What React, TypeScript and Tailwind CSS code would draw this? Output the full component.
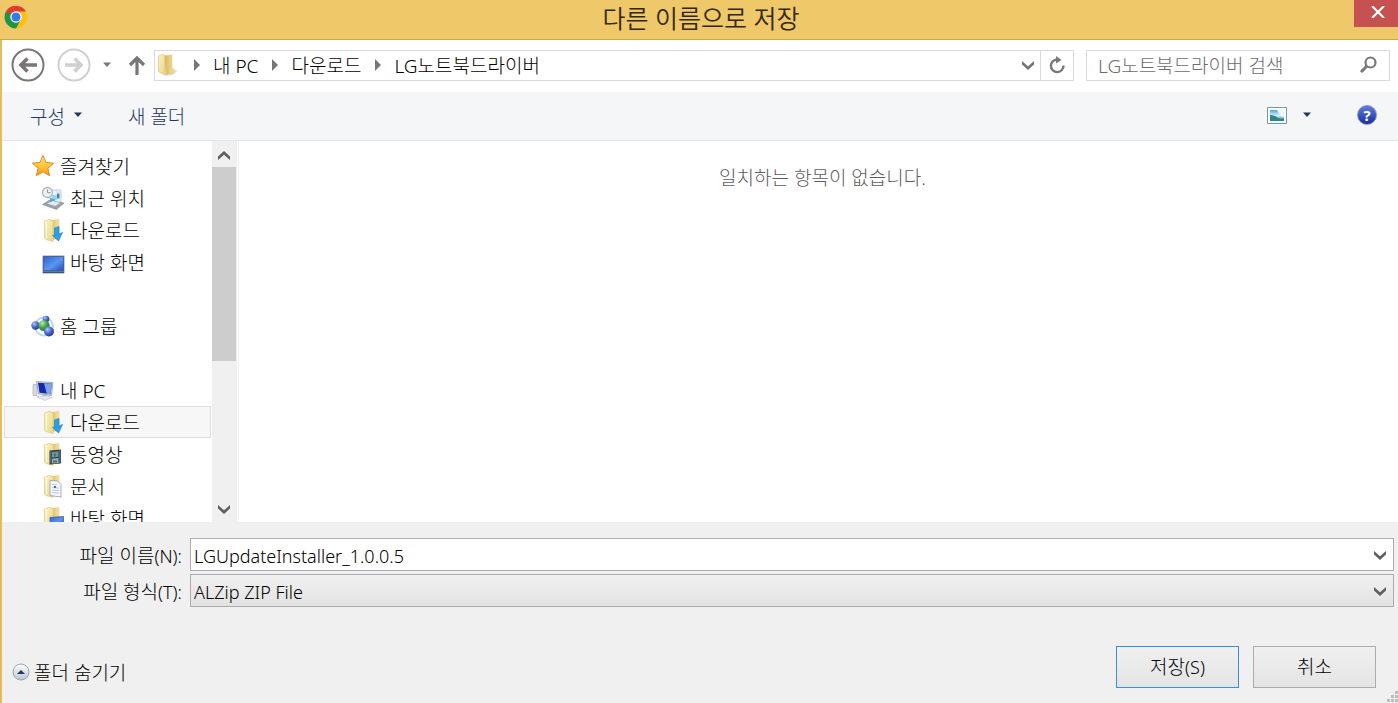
import { useState } from 'react';

const sidebarItems = [
  { id: 'favorites', name: '즐겨찾기', icon: 'star', level: 0 },
  { id: 'recent', name: '최근 위치', icon: 'recent', level: 1 },
  { id: 'fav-downloads', name: '다운로드', icon: 'download', level: 1 },
  { id: 'fav-desktop', name: '바탕 화면', icon: 'desktop', level: 1 },
  { id: 'gap-1', name: '', icon: '', level: 0 },
  { id: 'homegroup', name: '홈 그룹', icon: 'homegroup', level: 0 },
  { id: 'gap-2', name: '', icon: '', level: 0 },
  { id: 'pc', name: '내 PC', icon: 'pc', level: 0 },
  { id: 'downloads', name: '다운로드', icon: 'download', level: 1 },
  { id: 'videos', name: '동영상', icon: 'video', level: 1 },
  { id: 'documents', name: '문서', icon: 'document', level: 1 },
  { id: 'desktop', name: '바탕 화면', icon: 'folder-desktop', level: 1 },
];

const breadcrumbs = ['내 PC', '다운로드', 'LG노트북드라이버'];

function Gradients() {
  return (
    <svg width="0" height="0" className="absolute" aria-hidden="true">
      <defs>
        <linearGradient id="folderFront" x1="0" y1="0" x2="1" y2="1">
          <stop offset="0" stopColor="#fbf3c4" />
          <stop offset="1" stopColor="#ebd486" />
        </linearGradient>
        <linearGradient id="folderBack" x1="0" y1="0" x2="1" y2="0">
          <stop offset="0" stopColor="#d4b45c" />
          <stop offset="1" stopColor="#f5e6a2" />
        </linearGradient>
        <linearGradient id="starFill" x1="0" y1="0" x2="0" y2="1">
          <stop offset="0" stopColor="#ffe680" />
          <stop offset="0.5" stopColor="#ffc93c" />
          <stop offset="1" stopColor="#f7941e" />
        </linearGradient>
        <linearGradient id="screenFill" x1="0" y1="0" x2="1" y2="1">
          <stop offset="0" stopColor="#2f63cf" />
          <stop offset="0.55" stopColor="#5b95f0" />
          <stop offset="1" stopColor="#1f50bd" />
        </linearGradient>
        <radialGradient id="blueBall" cx="0.35" cy="0.3" r="0.8">
          <stop offset="0" stopColor="#b5c6f7" />
          <stop offset="0.5" stopColor="#4a66c8" />
          <stop offset="1" stopColor="#1d2f86" />
        </radialGradient>
        <radialGradient id="greenBall" cx="0.35" cy="0.3" r="0.8">
          <stop offset="0" stopColor="#b8ecb0" />
          <stop offset="0.5" stopColor="#46a04a" />
          <stop offset="1" stopColor="#1d6b2a" />
        </radialGradient>
        <linearGradient id="knob" x1="0" y1="0" x2="0" y2="1">
          <stop offset="0" stopColor="#ffffff" />
          <stop offset="1" stopColor="#b9c6d4" />
        </linearGradient>
        <linearGradient id="photo" x1="0" y1="0" x2="0" y2="1">
          <stop offset="0" stopColor="#4f9fe6" />
          <stop offset="0.5" stopColor="#d5f0fa" />
          <stop offset="1" stopColor="#2b7fa0" />
        </linearGradient>
      </defs>
    </svg>
  );
}

/** Open folder, the base of most sidebar icons */
function FolderShape() {
  return (
    <>
      <path d="M9 2.500 18 1.500V20.500L9 22z" fill="url(#folderBack)" stroke="#e3cf8c" strokeWidth="0.6" />
      <path d="M3.500 3 9 1l3.200 2.500V23.500L5 21.500l-1.500-1z" fill="url(#folderFront)" stroke="#dcc67c" strokeWidth="0.6" />
      <path d="M5.500 3.500v17" stroke="#fffbe0" strokeWidth="1.200" opacity="0.8" />
    </>
  );
}

function SidebarIcon({ name }: { name: string }) {
  return (
    <svg viewBox="0 0 24 24" className="size-6 shrink-0" aria-hidden="true">
      {name === 'star' && (
        <path
          d="M12 1.500l3.100 7 7.600.7-5.800 5 1.800 7.500L12 17.800l-6.700 3.900 1.800-7.500-5.800-5 7.600-.7z"
          fill="url(#starFill)"
          stroke="#e08a1c"
          strokeWidth="1"
          strokeLinejoin="round"
        />
      )}
      {name === 'recent' && (
        <>
          <path d="M9 4h11v13H9z" fill="#e9f3fb" stroke="#b4c8d8" strokeWidth="0.8" />
          <path d="M15 3h5v4h-5z" fill="#d4e6f4" />
          <path d="M11 9h5v5h-5z" fill="#9bd6ee" />
          <path d="M16 7.500h2.500v5H16z" fill="#3f83b8" />
          <path d="M9 12l5 1v4l-5-1z" fill="#4fb4d4" />
          <path d="M1.500 18.500 8 14.500l15 2.500-7.500 6.500z" fill="#9aa3aa" stroke="#7b868e" strokeWidth="0.6" />
          <path d="M6 17.500l6-2.500 7 2-5 3z" fill="#e3eaf0" />
          <circle cx="6.500" cy="6.500" r="5" fill="#edf1f3" stroke="#b0b8bd" strokeWidth="1.300" />
          <path d="M6.500 3.500v3.200h3" fill="none" stroke="#8b959b" strokeWidth="1" />
        </>
      )}
      {name === 'download' && (
        <>
          <FolderShape />
          <path
            d="M13.500 10 18 8.500v7.500l3.500-1.500-4 8.500-6-5.500 2-.5z"
            fill="#2f9fe0"
            stroke="#1b86cd"
            strokeWidth="0.7"
            strokeLinejoin="round"
          />
        </>
      )}
      {name === 'desktop' && (
        <>
          <path d="M1.500 5.500h22v18h-22z" fill="#8b98a8" />
          <path d="M2.500 6.500h20v14h-20z" fill="url(#screenFill)" stroke="#2b4d96" strokeWidth="0.6" />
          <path d="M2 21.500h21v1.500H2z" fill="#39577d" />
        </>
      )}
      {name === 'homegroup' && (
        <>
          <circle cx="13" cy="12.500" r="9" fill="none" stroke="#a5cfe6" strokeWidth="2" opacity="0.8" />
          <circle cx="15" cy="5" r="3.300" fill="url(#blueBall)" />
          <circle cx="4.500" cy="11.500" r="4.200" fill="url(#blueBall)" />
          <circle cx="13" cy="11.500" r="5.600" fill="url(#greenBall)" />
          <circle cx="18" cy="17.500" r="5" fill="url(#blueBall)" />
        </>
      )}
      {name === 'pc' && (
        <>
          <path d="M2 6.500h4v11H2z" fill="#d5dbe0" stroke="#a0a8b0" strokeWidth="0.6" />
          <path d="M5.500 3.500l16.500 1-1.500 13L7.500 16z" fill="#cbd6e2" stroke="#8997a8" strokeWidth="0.7" />
          <path d="M7 4.800l13.800.8-1.200 10.700L8.500 14.800z" fill="#1629a8" />
          <path d="M13 5.200l7.800.4-1.200 10.700-3.800-.5z" fill="#7fa2ec" />
          <path d="M12 17h4l1 2h-6z" fill="#9aa6b4" />
          <path d="M6 19l9-1.500 6 2-7 3z" fill="#e4e9ee" stroke="#b5bdc6" strokeWidth="0.6" />
        </>
      )}
      {name === 'video' && (
        <>
          <FolderShape />
          <path d="M8.500 8.500l11.500-1v14l-11.500 1z" fill="#39434a" />
          <path d="M11 10l6.500-.5v5.200L11 15.500z" fill="#579bb0" />
          <path d="M11 16.700l6.500-.7V21L11 21.500z" fill="#77bccb" />
          <path d="M13 11.500h2v3h-2zM12 18.500h4v2h-4z" fill="#8b5a38" />
          <path d="M9.800 9.500v12M18.800 8.500v13" stroke="#a9b3b6" strokeWidth="0.8" strokeDasharray="1 1" />
        </>
      )}
      {name === 'document' && (
        <>
          <FolderShape />
          <path d="M9 6.500l7.500.5 3.500 3.500V23L9 21.500z" fill="#f4f7fb" stroke="#8f9caf" strokeWidth="0.8" />
          <path d="M11 10.500l5 .5M11 13.500l7 .6M11 16l7 .6M11 18.500l7 .6" stroke="#b3c1d8" strokeWidth="0.9" />
          <path d="M13 12h2v2h-2z" fill="#4670b5" />
        </>
      )}
      {name === 'folder-desktop' && (
        <>
          <FolderShape />
          <path d="M9 11.500l13.500-1v10H9z" fill="url(#screenFill)" stroke="#3c5fa5" strokeWidth="0.8" />
        </>
      )}
    </svg>
  );
}

function ChromeLogo() {
  return (
    <svg viewBox="0 0 48 48" className="size-6 shrink-0" aria-hidden="true">
      <path d="M24 13h19.900A23 23 0 0 1 24 47l9.500-17.500z" fill="#fbc116" />
      <path d="M14.500 29.500 4.100 12.500 14 13l19.500 16.500L24 47z" fill="#229342" />
      <path d="M24 47A23 23 0 0 1 4.100 12.500L24 24z" fill="#229342" />
      <path d="M14.500 18.500 4.100 12.500A23 23 0 0 1 43.900 13H24z" fill="#e33b2e" />
      <circle cx="24" cy="24" r="11.500" fill="#fff" />
      <circle cx="24" cy="24" r="9" fill="#2f7bea" />
    </svg>
  );
}

function Chevron({ up = false, className = '' }: { up?: boolean; className?: string }) {
  return (
    <svg viewBox="0 0 12 10" className={`h-[10px] w-[12px] ${className}`} aria-hidden="true">
      <path d={up ? 'M0 9V5.500L6 0l6 5.500V9L6 3.700z' : 'M0 1v3.500L6 10l6-5.500V1L6 6.300z'} fill="currentColor" />
    </svg>
  );
}

function Caret() {
  return (
    <svg viewBox="0 0 10 6" className="h-[6px] w-[10px]" aria-hidden="true">
      <path d="M1 .5h8L5 5z" fill="currentColor" />
    </svg>
  );
}

function TitleBar() {
  return (
    <header className="grid h-10 shrink-0 grid-cols-[1fr_auto_1fr] items-start border-b border-[#cfa550] bg-[#efc869]">
      <div className="pt-[5px] pl-1">
        <ChromeLogo />
      </div>
      <h1 className="pl-1 text-[25px] leading-[37px] font-[350] text-[#33270f]">다른 이름으로 저장</h1>
      <button aria-label="닫기" className="flex h-[27px] w-11 items-center justify-center justify-self-end bg-[#c75050] pb-1 pl-1 text-white">
        <svg viewBox="0 0 14 12" className="h-3 w-[14px]" aria-hidden="true">
          <path d="M1 0 13 12M13 0 1 12" stroke="currentColor" strokeWidth="2.200" />
        </svg>
      </button>
    </header>
  );
}

function AddressBar() {
  return (
    <div className="flex h-[52px] shrink-0 items-center bg-white pr-2 pb-[2px] pl-[9px]">
      <button aria-label="뒤로" className="text-[#777]">
        <svg viewBox="0 0 34 34" className="size-[34px]" aria-hidden="true">
          <circle cx="17" cy="17" r="15.500" fill="none" stroke="currentColor" strokeWidth="2" />
          <path d="M9 17h17M16.500 10.500 10 17l6.500 6.500" fill="none" stroke="currentColor" strokeWidth="3.600" />
        </svg>
      </button>
      <button aria-label="앞으로" className="ml-3 text-[#d0d0d0]">
        <svg viewBox="0 0 34 34" className="size-[34px]" aria-hidden="true">
          <circle cx="17" cy="17" r="15.500" fill="none" stroke="currentColor" strokeWidth="2" />
          <path d="M8 17h17M17.500 10.500 24 17l-6.500 6.500" fill="none" stroke="currentColor" strokeWidth="3.600" />
        </svg>
      </button>
      <button aria-label="최근 위치" className="ml-[11px] text-[#777]">
        <Caret />
      </button>
      <button aria-label="위로" className="ml-4 text-[#777]">
        <svg viewBox="0 0 18 20" className="h-5 w-[18px]" aria-hidden="true">
          <path d="M9 20V3M2 10l7-7 7 7" fill="none" stroke="currentColor" strokeWidth="3.200" />
        </svg>
      </button>

      <nav className="ml-2 flex h-[31px] min-w-0 flex-1 items-center border border-[#d9d9d9]">
        <svg viewBox="0 0 24 24" className="ml-px size-6" aria-hidden="true">
          <path d="M10 20l12-3-5 5-8 1z" fill="#c9c9c9" opacity="0.6" />
          <path d="M8 2.500 16 2v13l3 2-1 3-8 2z" fill="url(#folderBack)" stroke="#e6cf7d" strokeWidth="0.6" />
          <path d="M2.500 3 7 1.500 9 3v19l-5-2.500-1.500-1z" fill="url(#folderFront)" stroke="#d5bb69" strokeWidth="0.6" />
        </svg>
        {breadcrumbs.map((crumb) => (
          <div key={crumb} className="flex items-center">
            <svg viewBox="0 0 8 12" className="mr-3 ml-[13px] h-3 w-2 text-[#777]" aria-hidden="true">
              <path d="M1 0v12l6-6z" fill="currentColor" />
            </svg>
            <a href="#" className="pt-[2px] whitespace-nowrap">
              {crumb}
            </a>
          </div>
        ))}
        <button aria-label="이전 위치" className="ml-auto flex h-full w-6 items-center justify-center text-[#777]">
          <Chevron />
        </button>
        <button aria-label="새로 고침" className="flex h-full w-[33px] items-center justify-center border-l border-[#d9d9d9] text-[#777]">
          <svg viewBox="0 0 18 18" className="size-[18px]" aria-hidden="true">
            <path d="M9 3.500A6.300 6.300 0 1 0 15.500 9.500" fill="none" stroke="currentColor" strokeWidth="2.400" />
            <path d="M8 0l5.500 4L8 7.500z" fill="currentColor" />
          </svg>
        </button>
      </nav>

      <div className="ml-3 flex h-[31px] w-[304px] items-center border border-[#d9d9d9] pr-3 pl-[11px]">
        <input
          aria-label="LG노트북드라이버 검색"
          placeholder="LG노트북드라이버 검색"
          className="min-w-0 flex-1 pt-[2px] outline-none placeholder:text-[#6d6d6d]"
        />
        <svg viewBox="0 0 18 18" className="size-[18px] text-[#777]" aria-hidden="true">
          <circle cx="11.500" cy="6.500" r="5" fill="none" stroke="currentColor" strokeWidth="2.200" />
          <path d="M8 10 2 16" stroke="currentColor" strokeWidth="3" />
        </svg>
      </div>
    </div>
  );
}

function Toolbar() {
  return (
    <div className="flex h-[49px] shrink-0 items-center border-b border-[#e3e6e9] bg-[#f4f6f8] pr-[21px] pb-[2px] pl-7 text-[#1e395b]">
      <button className="flex items-center gap-2">
        <span className="pt-1">구성</span>
        <Caret />
      </button>
      <button className="ml-[45px] pt-1">새 폴더</button>
      <button aria-label="보기 변경" className="ml-auto">
        <svg viewBox="0 0 20 17" className="h-[17px] w-5" aria-hidden="true">
          <path d="M.5.5h19v16H.5z" fill="#fff" stroke="#7d93ab" />
          <path d="M3 3h14v11H3z" fill="url(#photo)" />
          <path d="M3 8q5 0 8 3 3 1 6 0v3H3z" fill="#2c8a83" />
          <path d="M10 3h7v7q-4 0-7-7z" fill="#e8f7fc" />
        </svg>
      </button>
      <button aria-label="보기 옵션" className="ml-[15px]">
        <Caret />
      </button>
      <button aria-label="도움말" className="ml-[45px] flex size-5 items-center justify-center rounded-full border border-[#8b93b5] bg-linear-to-b from-[#5e7be0] to-[#1a2f9f] text-[15px] leading-none font-bold text-white">
        ?
      </button>
    </div>
  );
}

function Sidebar() {
  const [selected, setSelected] = useState('downloads');

  return (
    <aside className="flex shrink-0">
      <ul className="w-[210px] overflow-hidden pt-[9px] pr-px pl-[2px]">
        {sidebarItems.map((item) => (
          <li key={item.id} className="h-8">
            {item.name && (
              <button
                onClick={() => setSelected(item.id)}
                className={`flex h-full w-full items-center gap-[5px] border ${item.level ? 'pl-9' : 'pl-[26px]'} ${
                  selected === item.id ? 'border-[#dedede] bg-[#f7f7f7]' : 'border-transparent'
                }`}
              >
                <SidebarIcon name={item.icon} />
                <span className="pt-[2px]">{item.name}</span>
              </button>
            )}
          </li>
        ))}
      </ul>
      <div className="flex w-6 flex-col bg-[#f0f0f0] text-[#606060]">
        <button aria-label="위로 스크롤" className="flex h-[26px] items-center justify-center pt-1">
          <Chevron up />
        </button>
        <div className="h-[194px] bg-[#cdcdcd]" />
        <button aria-label="아래로 스크롤" className="mt-auto flex h-[26px] items-center justify-center">
          <Chevron />
        </button>
      </div>
      <div className="w-[3px] border-x border-[#f0f0f0]" />
    </aside>
  );
}

function SaveForm() {
  const [fileName, setFileName] = useState('LGUpdateInstaller_1.0.0.5');

  return (
    <form onSubmit={(e) => e.preventDefault()} className="relative shrink-0 bg-[#f0f0f0] pt-4 pb-[15px]">
      <div className="grid grid-cols-[180px_1fr] items-center gap-x-2 gap-y-[3px] pr-1">
        <label htmlFor="file-name" className="pt-[2px] text-right">
          파일 이름<span className="text-[18px]">(N):</span>
        </label>
        <div className="flex h-[33px] border border-[#abadb3] bg-white">
          <input
            id="file-name"
            value={fileName}
            onChange={(e) => setFileName(e.target.value)}
            className="min-w-0 flex-1 pt-[2px] pl-[3px] text-[18px] outline-none"
          />
          <button type="button" aria-label="이전 파일 이름" className="flex w-[26px] items-center justify-center text-[#606060]">
            <Chevron />
          </button>
        </div>
        <label htmlFor="file-type" className="pt-[2px] text-right">
          파일 형식<span className="text-[18px]">(T):</span>
        </label>
        <div className="relative h-[33px]">
          <select
            id="file-type"
            className="h-full w-full appearance-none border border-[#acacac] bg-linear-to-b from-[#f0f0f0] to-[#e3e3e3] pt-[2px] pl-[3px] text-[18px] outline-none"
          >
            <option>ALZip ZIP File</option>
          </select>
          <Chevron className="pointer-events-none absolute top-3 right-2 text-[#606060]" />
        </div>
      </div>

      <div className="mt-[39px] flex items-center gap-[14px] pr-[22px] pl-[10px]">
        <button type="button" className="mr-auto flex items-center gap-1 pt-[9px]">
          <svg viewBox="0 0 18 18" className="size-[18px]" aria-hidden="true">
            <circle cx="9" cy="9" r="8" fill="url(#knob)" stroke="#9aa7b5" />
            <path d="M5 11 9 7 13 11z" fill="#1e395b" />
          </svg>
          <span className="pt-[2px]">폴더 숨기기</span>
        </button>
        <button type="submit" className="h-[42px] w-[123px] border border-[#3c8ddc] bg-linear-to-b from-[#f0f0f0] to-[#e4e4e4]">
          저장<span className="text-[18px]">(S)</span>
        </button>
        <button type="button" className="h-[42px] w-[123px] border border-[#acacac] bg-linear-to-b from-[#f0f0f0] to-[#e4e4e4]">
          취소
        </button>
      </div>

      {/* Resize grip */}
      <svg viewBox="0 0 11 11" className="absolute right-0 bottom-px size-[11px]" aria-hidden="true">
        <path d="M8 0h3v3H8zM4 4h3v3H4zM8 4h3v3H8zM0 8h3v3H0zM4 8h3v3H4zM8 8h3v3H8z" fill="#bdbdbd" />
      </svg>
    </form>
  );
}

export default function App() {
  return (
    <div className="flex h-screen flex-col bg-white font-['Noto_Sans','Noto_Sans_CJK_KR',sans-serif] text-[19px] leading-7 font-light text-black">
      <Gradients />
      <TitleBar />
      <div className="flex min-h-0 flex-1 flex-col border-l-2 border-[#e6bb5c]">
        <AddressBar />
        <Toolbar />
        <div className="flex min-h-0 flex-1">
          <Sidebar />
          <main className="min-w-0 flex-1 overflow-hidden pt-[23px] pl-2 text-center text-[#5c5c5c]">일치하는 항목이 없습니다.</main>
        </div>
        <SaveForm />
      </div>
    </div>
  );
}
